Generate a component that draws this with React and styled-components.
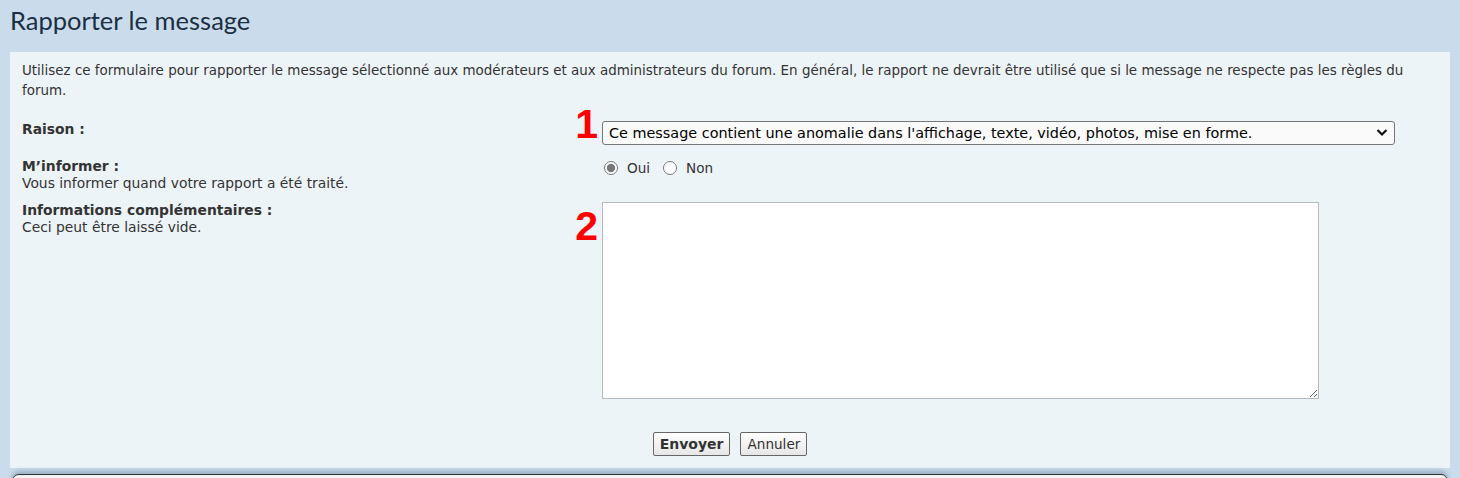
import React, { useState } from 'react'
import styled, { createGlobalStyle } from 'styled-components'

const GlobalStyle = createGlobalStyle`
  html, body {
    margin: 0;
    padding: 0;
    background: #cadceb;
  }
  body {
    font-family: "DejaVu Sans", Verdana, sans-serif;
    color: #333333;
    overflow: hidden;
  }
`

const Page = styled.div`
  padding: 0 10px;
`

const Title = styled.h2`
  margin: 0;
  padding: 5px 0 0 0;
  height: 52px;
  box-sizing: border-box;
  font-family: "Lato", "Open Sans", sans-serif;
  font-weight: 400;
  font-size: 25.5px;
  color: #1b2f43;
`

const Panel = styled.div`
  background: #edf4f8;
  padding: 9px 12px 12px 12px;
`

const Intro = styled.p`
  margin: 0 0 20px 0;
  font-size: 13.45px;
  line-height: 20px;
`

const Row = styled.div`
  display: grid;
  grid-template-columns: 580px 1fr;
  margin-bottom: ${p => p.gap || 10}px;
`

const Label = styled.div`
  font-size: 13.85px;
  line-height: 17px;

  & strong {
    display: block;
    font-weight: 700;
  }
`

const Field = styled.div`
  position: relative;
  display: flex;
  align-items: flex-start;
  padding-top: ${p => p.offset || 0}px;
`

const Marker = styled.span`
  position: absolute;
  right: calc(100% + 4px);
  top: ${p => p.top}px;
  font-family: "Liberation Sans", Arial, sans-serif;
  font-weight: 900;
  font-size: 41px;
  line-height: 1;
  color: #ff0000;
`

const SelectWrap = styled.div`
  position: relative;
  width: 793px;

  & svg {
    position: absolute;
    right: 7px;
    top: 7px;
    pointer-events: none;
  }
`

const Select = styled.select`
  appearance: none;
  width: 100%;
  height: 24px;
  box-sizing: border-box;
  border: 1px solid #767676;
  border-radius: 3px;
  background: #fafafa;
  color: #000;
  font-family: "DejaVu Sans", Verdana, sans-serif;
  font-size: 14.4px;
  padding: 0 6px;
`

const RadioLabel = styled.label`
  display: inline-flex;
  align-items: center;
  font-size: 13.6px;
  color: #333;
  margin-right: 11px;

  & input {
    margin: 0 9px 0 2px;
    width: 14px;
    height: 14px;
    accent-color: #777;
  }
`

const TextArea = styled.textarea`
  width: 717px;
  height: 197px;
  box-sizing: border-box;
  border: 1px solid #b4bac0;
  background: #ffffff;
  resize: both;
`

const Actions = styled.div`
  display: flex;
  justify-content: center;
  gap: 10px;
  margin-top: 33px;
`

const Button = styled.button`
  height: 24px;
  padding: 0 6px;
  border: 1px solid #666666;
  border-radius: 2px;
  background: linear-gradient(to bottom, #ffffff 0%, #e6e6e6 100%);
  font-family: "DejaVu Sans", Verdana, sans-serif;
  font-size: ${p => (p.primary ? 14 : 13.6)}px;
  font-weight: ${p => (p.primary ? 700 : 400)};
  color: #333;
`

const NextBox = styled.div`
  margin: 6px 2px 0 2px;
  height: 20px;
  border: 1px solid #333;
  border-radius: 7px;
  background: #f3f3f3;
  box-shadow: 0 -3px 5px rgba(60, 90, 120, 0.35);
`

function Chevron() {
  return (
    <svg width="12" height="9" viewBox="0 0 12 9">
      <path d="M1.5 2 L6 6.5 L10.5 2" fill="none" stroke="#111" strokeWidth="2.2" />
    </svg>
  )
}

function App() {
  const [notify, setNotify] = useState('oui')

  return (
    <Page>
      <GlobalStyle />
      <Title>Rapporter le message</Title>
      <Panel>
        <Intro>
          Utilisez ce formulaire pour rapporter le message sélectionné aux modérateurs et aux administrateurs du forum. En général, le rapport ne devrait être utilisé que si le message ne respecte pas les règles du forum.
        </Intro>

        <Row gap={13}>
          <Label><strong>Raison :</strong></Label>
          <Field>
            <Marker top={-17}>1</Marker>
            <SelectWrap>
              <Select defaultValue="1">
                <option value="1">Ce message contient une anomalie dans l'affichage, texte, vidéo, photos, mise en forme.</option>
              </Select>
              <Chevron />
            </SelectWrap>
          </Field>
        </Row>

        <Row gap={10}>
          <Label>
            <strong>M’informer :</strong>
            Vous informer quand votre rapport a été traité.
          </Label>
          <Field offset={2}>
            <RadioLabel>
              <input type="radio" name="notify" checked={notify === 'oui'} onChange={() => setNotify('oui')} />
              Oui
            </RadioLabel>
            <RadioLabel>
              <input type="radio" name="notify" checked={notify === 'non'} onChange={() => setNotify('non')} />
              Non
            </RadioLabel>
          </Field>
        </Row>

        <Row gap={0}>
          <Label>
            <strong>Informations complémentaires :</strong>
            Ceci peut être laissé vide.
          </Label>
          <Field>
            <Marker top={4}>2</Marker>
            <TextArea />
          </Field>
        </Row>

        <Actions>
          <Button primary>Envoyer</Button>
          <Button>Annuler</Button>
        </Actions>
      </Panel>
      <NextBox />
    </Page>
  )
}

export default App
